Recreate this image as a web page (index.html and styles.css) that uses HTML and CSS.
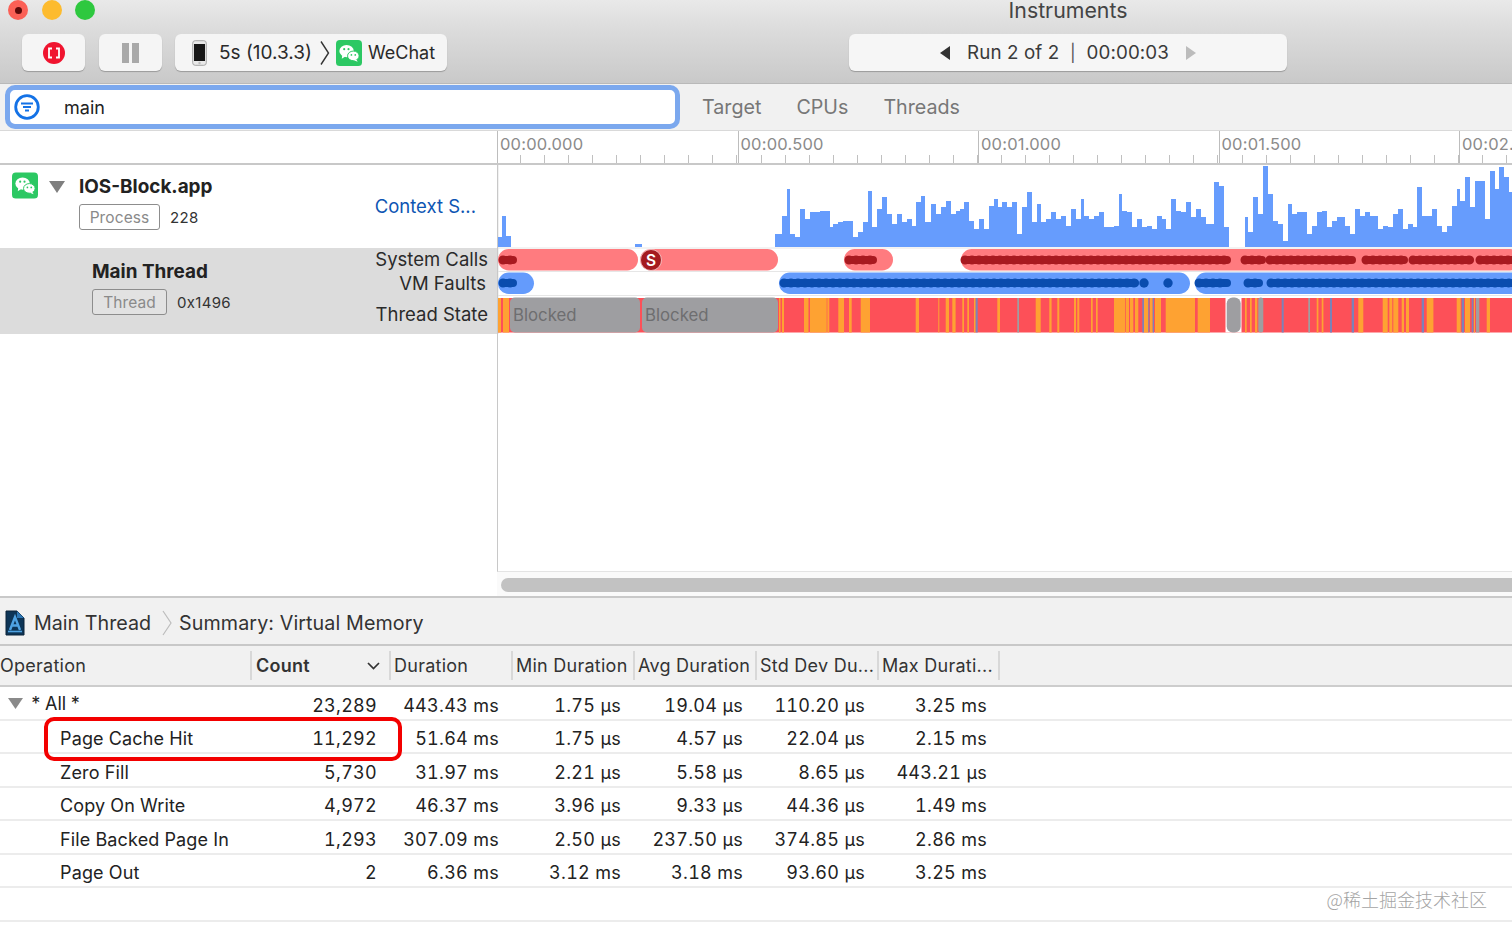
FILE: index.html
```html
<!DOCTYPE html>
<html lang="en">
<head>
<meta charset="utf-8">
<title>Instruments</title>
<link rel="stylesheet" href="styles.css">
</head>
<body>
<div class="app">
  <header class="titlebar">
    <div class="titlerow">
      <div class="lights">
        <span class="light red"><span class="light-dot"></span></span>
        <span class="light yellow"></span>
        <span class="light green"></span>
      </div>
      <div class="title">Instruments</div>
    </div>
    <div class="toolrow">
      <button class="tool-btn">
        <svg class="rec" width="24" height="24" viewBox="0 0 24 24"><circle cx="12" cy="12" r="11" fill="#f0142f"/><path d="M10 7.500H7V16.500H10M14 7.500H17V16.500H14" fill="none" stroke="#fff" stroke-width="1.800"/></svg>
      </button>
      <button class="tool-btn">
        <svg width="20" height="22" viewBox="0 0 20 22"><path d="M1 1H8V21H1ZM11 1H18V21H11Z" fill="#a9a9a9"/></svg>
      </button>
      <div class="scheme">
        <svg class="phone" width="15" height="26" viewBox="0 0 15 26"><rect x="0.700" y="0.700" width="13.600" height="24.600" rx="2.500" fill="#e8e8e8" stroke="#a5a5a5"/><rect x="2" y="4" width="11" height="17" fill="#161616"/><circle cx="7.500" cy="23" r="1.200" fill="#bbb"/></svg>
        <span class="scheme-device">5s (10.3.3)</span>
        <svg class="chev" width="10" height="26" viewBox="0 0 10 26"><path d="M1 1.500L8.500 13L1 24.500" fill="none" stroke="#333" stroke-width="1.400"/></svg>
        <svg class="wechat" width="26" height="26" viewBox="0 0 27 27"><rect width="27" height="27" rx="4" fill="#2cc863"/><ellipse cx="11" cy="11.500" rx="7.500" ry="6.300" fill="#fff"/><path d="M6.500 15.500L6 19.500L10 17Z" fill="#fff"/><ellipse cx="18" cy="16.500" rx="6" ry="5" fill="#fff" stroke="#2cc863"/><path d="M21 20L22.500 22.500L18.500 21Z" fill="#fff"/><circle cx="8.500" cy="9.500" r="1.100" fill="#2cc863"/><circle cx="13" cy="9.500" r="1.100" fill="#2cc863"/><circle cx="16" cy="15.500" r=".9" fill="#2cc863"/><circle cx="20" cy="15.500" r=".9" fill="#2cc863"/></svg>
        <span class="scheme-app">WeChat</span>
      </div>
      <div class="runbox">
        <svg width="10" height="14" viewBox="0 0 10 14"><path d="M10 0V14L0 7Z" fill="#333"/></svg>
        <span class="run-text">Run 2 of 2&nbsp; <span class="run-pipe">|</span>&nbsp; 00:00:03</span>
        <svg width="10" height="14" viewBox="0 0 10 14"><path d="M0 0V14L10 7Z" fill="#bcbcbc"/></svg>
      </div>
    </div>
  </header>

  <div class="filterbar">
    <div class="filter-field">
      <svg class="filter-icon" width="26" height="26" viewBox="0 0 26 26"><circle cx="13" cy="13" r="11.300" fill="#fff" stroke="#1472e6" stroke-width="2.800"/><path d="M7 9.500H19M9 13H17M11 16.500H15" stroke="#1472e6" stroke-width="1.800" fill="none"/></svg>
      <span class="filter-text">main</span>
    </div>
    <nav class="filter-tabs"><span>Target</span><span>CPUs</span><span>Threads</span></nav>
  </div>

  <div class="rulerrow">
    <div class="ruler-left"></div>
    <div class="ruler">
      <span class="tick-cell">00:00.000</span>
      <span class="tick-cell">00:00.500</span>
      <span class="tick-cell">00:01.000</span>
      <span class="tick-cell">00:01.500</span>
      <span class="tick-cell tick-last">00:02.</span>
    </div>
  </div>

  <section class="tracks">
    <div class="track-labels">
      <div class="process-row">
        <svg class="wechat" width="26" height="27" viewBox="0 0 27 27"><rect width="27" height="27" rx="4" fill="#2cc863"/><ellipse cx="11" cy="11.500" rx="7.500" ry="6.300" fill="#fff"/><path d="M6.500 15.500L6 19.500L10 17Z" fill="#fff"/><ellipse cx="18" cy="16.500" rx="6" ry="5" fill="#fff" stroke="#2cc863"/><path d="M21 20L22.500 22.500L18.500 21Z" fill="#fff"/><circle cx="8.500" cy="9.500" r="1.100" fill="#2cc863"/><circle cx="13" cy="9.500" r="1.100" fill="#2cc863"/><circle cx="16" cy="15.500" r=".9" fill="#2cc863"/><circle cx="20" cy="15.500" r=".9" fill="#2cc863"/></svg>
        <svg class="disclosure" width="16" height="12" viewBox="0 0 16 12"><path d="M0 0H16L8 12Z" fill="#7f7f7f"/></svg>
        <div class="track-info">
          <div class="track-name">IOS-Block.app</div>
          <div class="track-meta"><span class="tag">Process</span><span class="meta-val">228</span></div>
        </div>
        <div class="context">Context S...</div>
      </div>
      <div class="thread-row">
        <div class="track-info">
          <div class="track-name">Main Thread</div>
          <div class="track-meta"><span class="tag tag-thread">Thread</span><span class="meta-val">0x1496</span></div>
        </div>
        <div class="lane-labels">
          <span class="lane-sys">System Calls</span>
          <span class="lane-vm">VM Faults</span>
          <span class="lane-state">Thread State</span>
        </div>
      </div>
    </div>
    <div class="track-graph">
      <svg class="timeline" width="1015" height="169" viewBox="497 165 1015 169">
        <path class="divider" d="M497.500 165V334"/>
        <path class="hist" d="M498 247V237H502V216H506V236H511V247ZM635 247V244H642V247ZM775 247V234H782V216H787V189H790V234H795V237H800V209H805V219H810V212H820V211H830V227H833V224H838V222H843V221H853V237H858V232H863V222H868V191H872V227H877V209H882V197H887V214H892V224H897V214H902V222H907V219H912V226H916V202H921V196H925V222H931V204H936V214H941V207H946V201H951V214H956V211H960V209H964V202H969V221H974V229H979V219H984V229H989V206H994V199H998V207H1002V202H1007V207H1012V202H1017V234H1022V207H1027V192H1032V222H1037V204H1041V222H1046V219H1051V212H1056V219H1061V216H1066V226H1071V209H1076V219H1081V199H1084V216H1089V219H1094V216H1099V212H1104V227H1114V226H1119V194H1122V211H1127V212H1132V227H1137V219H1142V227H1147V226H1152V229H1157V216H1162V219H1166V229H1171V199H1176V211H1181V212H1186V202H1191V217H1196V209H1201V217H1206V224H1214V182H1219V186H1224V227H1229V247ZM1245 247V217H1248V232H1253V197H1258V214H1263V166H1268V194H1273V221H1278V224H1283V241H1288V204H1292V214H1297V212H1307V234H1312V226H1317V212H1322V211H1327V227H1332V221H1337V217H1345V226H1350V234H1355V209H1360V216H1365V212H1370V216H1378V229H1383V226H1388V227H1393V214H1398V209H1403V229H1408V224H1413V227H1417V187H1422V216H1432V209H1437V226H1442V232H1447V226H1452V206H1457V189H1460V201H1465V177H1470V207H1475V181H1485V219H1490V171H1495V189H1499V167H1504V177H1509V192H1512V247Z"/>
        <path class="lane-line" d="M498 248H1512M498 271.500H1512M498 295.500H1512"/>
        <rect class="pill-red" x="498" y="249" width="140" height="21.500" rx="10.750"/>
        <rect class="pill-red" x="640" y="249" width="138" height="21.500" rx="10.750"/>
        <rect class="pill-red" x="844" y="249" width="49" height="21.500" rx="10.750"/>
        <rect class="pill-red" x="961" y="249" width="560" height="21.500" rx="10.750"/>
        <path class="dark-red" d="M503 260H513M849 260H873M965 260H1227M1245 260H1262M1270 260H1352M1366 260H1404M1413 260H1470M1480 260H1520"/>
        <path class="dark-red-dots" d="M503 260H513M849 260H873M965 260H1227M1245 260H1262M1270 260H1352M1366 260H1404M1413 260H1470M1480 260H1520"/>
        <circle class="badge" cx="651" cy="260" r="10.500"/>
        <text class="badge-text" x="651" y="265.500">S</text>
        <rect class="pill-blue" x="498" y="272.500" width="36" height="21.500" rx="10.750"/>
        <rect class="pill-blue" x="779" y="272.500" width="411" height="21.500" rx="10.750"/>
        <rect class="pill-blue" x="1195" y="272.500" width="330" height="21.500" rx="10.750"/>
        <path class="dark-blue" d="M503 283H513M784 283H1135M1199 283H1227M1248 283H1259M1271 283H1520"/>
        <path class="dark-blue-dots" d="M503 283H513M784 283H1135M1199 283H1227M1248 283H1259M1271 283H1520"/>
        <circle class="dot-blue" cx="1144" cy="283" r="4.700"/>
        <circle class="dot-blue" cx="1168" cy="283" r="4.700"/>
        <g class="state-red"><rect x="498" y="298" width="1014" height="34.500"/></g>
        <g class="state-orange">
          <rect x="498" y="298" width="3" height="34.500"/><rect x="503" y="298" width="6" height="34.500"/><rect x="779" y="298" width="1.500" height="34.500"/><rect x="782" y="298" width="2" height="34.500"/><rect x="804" y="298" width="4.500" height="34.500"/><rect x="810" y="298" width="16.700" height="34.500"/><rect x="827.300" y="298" width="2" height="34.500"/><rect x="838.300" y="298" width="5.700" height="34.500"/><rect x="849" y="298" width="2.700" height="34.500"/><rect x="860.700" y="298" width="9.300" height="34.500"/><rect x="915.700" y="298" width="3.300" height="34.500"/><rect x="938.300" y="298" width="1" height="34.500"/><rect x="945.700" y="298" width="3.300" height="34.500"/><rect x="952.300" y="298" width="3.300" height="34.500"/><rect x="962.300" y="298" width="1.700" height="34.500"/><rect x="967.300" y="298" width="1.700" height="34.500"/><rect x="974" y="298" width="1.700" height="34.500"/><rect x="997.300" y="298" width="2.700" height="34.500"/><rect x="1035.700" y="298" width="5" height="34.500"/><rect x="1049.300" y="298" width="2.300" height="34.500"/><rect x="1057.300" y="298" width="2" height="34.500"/><rect x="1074" y="298" width="2" height="34.500"/><rect x="1077.300" y="298" width="2" height="34.500"/><rect x="1091" y="298" width="1.700" height="34.500"/><rect x="1096" y="298" width="1.700" height="34.500"/><rect x="1114" y="298" width="11" height="34.500"/><rect x="1125.700" y="298" width="3.300" height="34.500"/><rect x="1130" y="298" width="3.300" height="34.500"/><rect x="1135" y="298" width="3.300" height="34.500"/><rect x="1144" y="298" width="4.300" height="34.500"/><rect x="1150" y="298" width="2.700" height="34.500"/><rect x="1155" y="298" width="6" height="34.500"/><rect x="1165.700" y="298" width="29.300" height="34.500"/><rect x="1197.700" y="298" width="12.300" height="34.500"/><rect x="1245" y="298" width="1.700" height="34.500"/><rect x="1250" y="298" width="1.700" height="34.500"/><rect x="1255" y="298" width="2.300" height="34.500"/><rect x="1316.700" y="298" width="1.700" height="34.500"/><rect x="1321.700" y="298" width="1.700" height="34.500"/><rect x="1358.300" y="298" width="5" height="34.500"/><rect x="1382.700" y="298" width="5" height="34.500"/><rect x="1389.300" y="298" width="3" height="34.500"/><rect x="1393.300" y="298" width="5" height="34.500"/><rect x="1401.700" y="298" width="2.300" height="34.500"/><rect x="1406" y="298" width="3" height="34.500"/><rect x="1426.700" y="298" width="6.700" height="34.500"/><rect x="1456.700" y="298" width="4" height="34.500"/><rect x="1465" y="298" width="5" height="34.500"/><rect x="1474" y="298" width="1" height="34.500"/><rect x="1486.700" y="298" width="3.300" height="34.500"/>
        </g>
        <g class="state-blue">
          <rect x="975.700" y="298" width="2" height="34.500"/><rect x="1142.300" y="298" width="1.700" height="34.500"/><rect x="1148.300" y="298" width="1" height="34.500"/><rect x="1152.700" y="298" width="1.300" height="34.500"/><rect x="1281.700" y="298" width="2" height="34.500"/><rect x="1330" y="298" width="2" height="34.500"/><rect x="1351.700" y="298" width="2.300" height="34.500"/><rect x="1421.700" y="298" width="2.300" height="34.500"/><rect x="1461.700" y="298" width="2.300" height="34.500"/><rect x="1471.700" y="298" width="1.700" height="34.500"/>
        </g>
        <g class="state-gray">
          <rect x="1017.300" y="298" width="1.700" height="34.500"/><rect x="1308.300" y="298" width="1.700" height="34.500"/><rect x="1476" y="298" width="3.300" height="34.500"/>
          <rect class="gap-white" x="1225.500" y="298" width="16" height="34.500"/>
          <rect x="510" y="297.500" width="130" height="35" rx="5"/><rect x="642" y="297.500" width="136" height="35" rx="5"/><rect x="1226.700" y="297.500" width="14" height="35" rx="6"/><rect x="1258.300" y="297.500" width="5" height="35" rx="2.500"/>
        </g>
        <text class="blocked" x="513" y="321">Blocked</text>
        <text class="blocked" x="645" y="321">Blocked</text>
      </svg>
      <div class="graph-fill"></div>
      <div class="scroller"><div class="scroll-thumb"></div></div>
    </div>
  </section>

  <div class="breadcrumb">
    <svg class="doc-icon" width="20" height="26" viewBox="0 0 20 26"><path d="M1 1H12L19 8V25H1Z" fill="#0d3557" stroke="#0a2238"/><path d="M12 1V8H19Z" fill="#2f78b5"/><path d="M5 20L10 7L15 20M7 15.500H13" fill="none" stroke="#4fa3e3" stroke-width="2.400"/><path d="M3 21.500H17" stroke="#4fa3e3" stroke-width="1.600"/></svg>
    <span class="crumb">Main Thread</span>
    <svg class="crumb-sep" width="10" height="26" viewBox="0 0 10 26"><path d="M1 1L9 13L1 25" fill="none" stroke="#bdbdbd" stroke-width="1.200"/></svg>
    <span class="crumb crumb-last">Summary: Virtual Memory</span>
  </div>

  <section class="table">
    <div class="thead">
      <div class="th th-op">Operation</div>
      <div class="th th-count"><span>Count</span><svg width="13" height="8" viewBox="0 0 13 8"><path d="M1 1L6.500 6.500L12 1" fill="none" stroke="#333" stroke-width="1.700"/></svg></div>
      <div class="th">Duration</div>
      <div class="th">Min Duration</div>
      <div class="th">Avg Duration</div>
      <div class="th">Std Dev Du...</div>
      <div class="th">Max Durati...</div>
    </div>
    <div class="tr">
      <div class="td td-name td-all"><svg width="15" height="11" viewBox="0 0 15 11"><path d="M0 0H15L7.500 11Z" fill="#8a8a8a"/></svg><span class="all-label">* All *</span></div>
      <div class="td">23,289</div><div class="td">443.43 ms</div><div class="td">1.75 µs</div><div class="td">19.04 µs</div><div class="td">110.20 µs</div><div class="td">3.25 ms</div>
    </div>
    <div class="tr">
      <div class="td td-name">Page Cache Hit</div>
      <div class="td">11,292</div><div class="td">51.64 ms</div><div class="td">1.75 µs</div><div class="td">4.57 µs</div><div class="td">22.04 µs</div><div class="td">2.15 ms</div>
    </div>
    <div class="tr">
      <div class="td td-name">Zero Fill</div>
      <div class="td">5,730</div><div class="td">31.97 ms</div><div class="td">2.21 µs</div><div class="td">5.58 µs</div><div class="td">8.65 µs</div><div class="td">443.21 µs</div>
    </div>
    <div class="tr">
      <div class="td td-name">Copy On Write</div>
      <div class="td">4,972</div><div class="td">46.37 ms</div><div class="td">3.96 µs</div><div class="td">9.33 µs</div><div class="td">44.36 µs</div><div class="td">1.49 ms</div>
    </div>
    <div class="tr">
      <div class="td td-name">File Backed Page In</div>
      <div class="td">1,293</div><div class="td">307.09 ms</div><div class="td">2.50 µs</div><div class="td">237.50 µs</div><div class="td">374.85 µs</div><div class="td">2.86 ms</div>
    </div>
    <div class="tr">
      <div class="td td-name">Page Out</div>
      <div class="td">2</div><div class="td">6.36 ms</div><div class="td">3.12 ms</div><div class="td">3.18 ms</div><div class="td">93.60 µs</div><div class="td">3.25 ms</div>
    </div>
    <div class="tr tr-empty"></div>
    <div class="highlight"></div>
    <div class="watermark">@稀土掘金技术社区</div>
  </section>
</div>
</body>
</html>
```

FILE: styles.css
```css
* { box-sizing: border-box; }
html, body { margin: 0; padding: 0; background: #fff; }
body {
  width: 1512px;
  height: 936px;
  overflow: hidden;
  font-family: Inter, "Noto Sans", "Liberation Sans", sans-serif;
  color: #222;
}
.app { display: flex; flex-direction: column; width: 1512px; height: 936px; }

/* Title bar */
.titlebar {
  height: 83px;
  flex: none;
  background: linear-gradient(#e9e9e9 0, #dcdcdc 35%, #c9c9c9 100%);
}
.titlerow { display: flex; align-items: flex-start; height: 34px; padding-right: 225px; }
.lights { display: flex; gap: 13.500px; padding-left: 8px; }
.light { display: flex; align-items: center; justify-content: center; width: 20px; height: 20px; border-radius: 50%; }
.light.red { background: #fb6056; }
.light.yellow { background: #fdbb2e; }
.light.green { background: #2ec83f; }
.light-dot { width: 7px; height: 7px; border-radius: 50%; background: #5c0a0a; }
.title { margin-left: auto; width: 438px; text-align: center; font-size: 21.300px; line-height: 20px; color: #444; }
.toolrow { display: flex; align-items: center; height: 37px; padding-left: 22px; padding-right: 225px; gap: 14px; }
.tool-btn {
  display: flex; align-items: center; justify-content: center;
  width: 63px; height: 37px; padding: 0;
  border: 0; border-radius: 6px;
  background: #f5f5f5;
  box-shadow: 0 1px 1px rgba(0,0,0,.25);
}
.tool-btn + .tool-btn { margin-right: -1px; }
.scheme {
  display: flex; align-items: center;
  width: 272px; height: 37px; padding-left: 17px;
  border-radius: 6px;
  background: #f5f5f5;
  box-shadow: 0 1px 1px rgba(0,0,0,.25);
  font-size: 19px;
  color: #2a2a2a;
}
.scheme-device { margin-left: 12px; width: 101px; white-space: nowrap; }
.chev { margin-right: 6px; }
.scheme-app { margin-left: 6px; font-size: 18px; }
.runbox {
  display: flex; align-items: center; justify-content: center; gap: 17px;
  margin-left: auto; width: 438px; height: 37px;
  border-radius: 6px;
  background: #f6f6f6;
  box-shadow: 0 1px 1px rgba(0,0,0,.25);
  font-size: 18.800px;
  letter-spacing: .1px;
  color: #3a3a3a;
}
.run-text { white-space: nowrap; }
.run-pipe { font-size: 17px; color: #555; }

/* Filter bar */
.filterbar {
  display: flex; align-items: center;
  height: 47px; flex: none;
  padding-left: 5px;
  background: #f1f1f1;
  border-top: 1px solid #b9b9b9;
}
.filter-field {
  display: flex; align-items: center;
  width: 675px; height: 44px;
  padding-left: 4px;
  background: #fff;
  border: 5px solid #7ba8ee;
  border-radius: 10px;
}
.filter-text { margin-left: 24px; font-size: 18px; color: #222; }
.filter-tabs { display: flex; gap: 35px; margin-left: 22px; font-size: 19.700px; color: #777; }

/* Ruler */
.rulerrow { display: flex; height: 35px; flex: none; border-bottom: 2px solid #c8c8c8; border-top: 1px solid #d9d9d9; }
.ruler-left { width: 497px; flex: none; }
.ruler {
  display: flex; flex: 1;
  background-image: repeating-linear-gradient(90deg, #c0c0c0 0 1px, transparent 1px 24.050px);
  background-size: 100% 8px;
  background-position: -1px 100%;
  background-repeat: no-repeat;
}
.tick-cell {
  flex: 0 0 240.500px;
  height: 100%;
  padding: 3px 0 0 2px;
  border-left: 1.500px solid #bdbdbd;
  font-size: 16.500px;
  letter-spacing: .2px;
  color: #8b8b8b;
  white-space: nowrap;
}
.tick-last { flex: 1 1 0; min-width: 0; }

/* Tracks */
.tracks { display: flex; height: 433px; flex: none; border-bottom: 2px solid #c9c9c9; }
.track-labels { width: 497px; flex: none; }
.process-row { display: flex; height: 83px; padding: 7px 21px 0 12px; }
.process-row .wechat { flex: none; }
.disclosure { margin: 9px 0 0 11px; flex: none; }
.track-info { margin-left: 14px; }
.track-name { margin-top: 1px; font-size: 18.900px; line-height: 28px; font-weight: 700; color: #222; }
.track-meta { display: flex; align-items: center; margin-top: 3px; }
.tag {
  display: flex; align-items: center; justify-content: center;
  width: 81px; height: 26px;
  border: 1.500px solid #8d8d8d;
  border-radius: 3px;
  font-size: 15.500px;
  letter-spacing: .1px;
  color: #8a8a8a;
}
.tag-thread { width: 75px; background: #e2e2e2; }
.meta-val { margin-left: 10px; font-size: 15px; letter-spacing: .3px; color: #333; }
.context { margin-left: auto; margin-top: 22px; font-size: 18.500px; line-height: 24px; color: #0d55b3; }
.thread-row {
  display: flex; justify-content: space-between;
  height: 86px; padding: 9px 9px 0 78px;
  background: #dcdcdc;
}
.lane-labels { display: flex; flex-direction: column; align-items: flex-end; margin-top: -10px; font-size: 18.500px; color: #2a2a2a; }
.lane-sys { line-height: 24px; }
.lane-vm { margin-right: 2px; line-height: 24px; }
.lane-state { margin-top: 7px; line-height: 24px; }

.track-graph { flex: 1; display: flex; flex-direction: column; min-width: 0; }
.timeline { display: block; flex: none; }
.graph-fill { flex: 1; border-left: 1.500px solid #c8c8c8; border-bottom: 1px solid #e4e4e4; background: #fff; }
.scroller { height: 24px; flex: none; padding: 5.500px 0 0 4px; background: #fafafa; }
.scroll-thumb { height: 14px; border-radius: 7px 0 0 7px; background: #c2c2c2; }

.divider { fill: none; stroke: #c8c8c8; stroke-width: 1.500; }
.hist { fill: #669cfd; }
.lane-line { fill: none; stroke: #e6e6e6; stroke-width: 1; }
.pill-red { fill: #ff7b7f; }
.pill-blue { fill: #649bfc; }
.dark-red { fill: none; stroke: #a81a20; stroke-width: 8; stroke-linecap: round; }
.dark-red-dots { fill: none; stroke: #a81a20; stroke-width: 9; stroke-linecap: round; stroke-dasharray: 0 7; }
.dark-blue { fill: none; stroke: #0a4cae; stroke-width: 8; stroke-linecap: round; }
.dark-blue-dots { fill: none; stroke: #0a4cae; stroke-width: 9; stroke-linecap: round; stroke-dasharray: 0 7; }
.dot-blue { fill: #0a4cae; }
.badge { fill: #a51a1f; stroke: #fff; stroke-width: .6; }
.badge-text { fill: #fff; font-size: 15.500px; font-weight: 600; text-anchor: middle; }
.state-red { fill: #fd5058; }
.state-orange { fill: #fea232; }
.state-blue { fill: #7c82b8; }
.state-gray { fill: #9e9ea1; }
.gap-white { fill: #fff; }
.blocked { font-size: 16.800px; fill: #6e6e70; }

/* Breadcrumb */
.breadcrumb {
  display: flex; align-items: center;
  height: 48px; flex: none;
  padding: 3px 0 0 5px;
  background: #f1f1f1;
  border-bottom: 2px solid #c8c8c8;
  font-size: 19.700px;
  color: #333;
}
.doc-icon { margin-right: 9px; }
.crumb-sep { margin: 0 7px 0 11px; }
.crumb { white-space: nowrap; }
.crumb-last { letter-spacing: .1px; }

/* Table */
.table { position: relative; flex: 1; }
.thead, .tr {
  display: grid;
  grid-template-columns: 252px 139px 122px 122px 122px 122px 121px;
}
.thead {
  height: 41px;
  align-items: center;
  background: #f1f1f1;
  border-bottom: 2px solid #cdcdcd;
  font-size: 18px;
  letter-spacing: .25px;
  color: #333;
}
.th {
  display: flex; align-items: center;
  height: 29px;
  padding-left: 3px;
  border-right: 2px solid #d8d8d8;
  white-space: nowrap;
}
.th-op { padding-left: 0; }
.th-count { justify-content: space-between; padding: 0 9px 0 4px; font-weight: 600; }
.tr {
  height: 33.500px;
  padding-top: 5px;
  align-items: center;
  border-bottom: 2px solid #ececec;
  font-size: 18px;
  letter-spacing: .28px;
  font-variant-numeric: tabular-nums;
  color: #222;
}
.td { padding-right: 14px; text-align: right; white-space: nowrap; }
.td:last-child { padding-right: 13px; }
.td-name { padding-left: 60px; padding-right: 0; text-align: left; letter-spacing: .15px; }
.td-all { display: flex; align-items: center; gap: 7px; padding-left: 8px; margin-top: -4px; }
.all-label { word-spacing: -1.500px; letter-spacing: 0; }
.tr-empty { display: block; }
.highlight {
  position: absolute;
  left: 44px; top: 71px;
  width: 358px; height: 44px;
  border: 4px solid #f30000;
  border-radius: 10px;
}
.watermark {
  position: absolute;
  right: 25px; top: 240px;
  font-family: "Noto Sans CJK SC", sans-serif;
  font-size: 18px;
  font-weight: 300;
  color: #a4a4a4;
  white-space: nowrap;
}
```
